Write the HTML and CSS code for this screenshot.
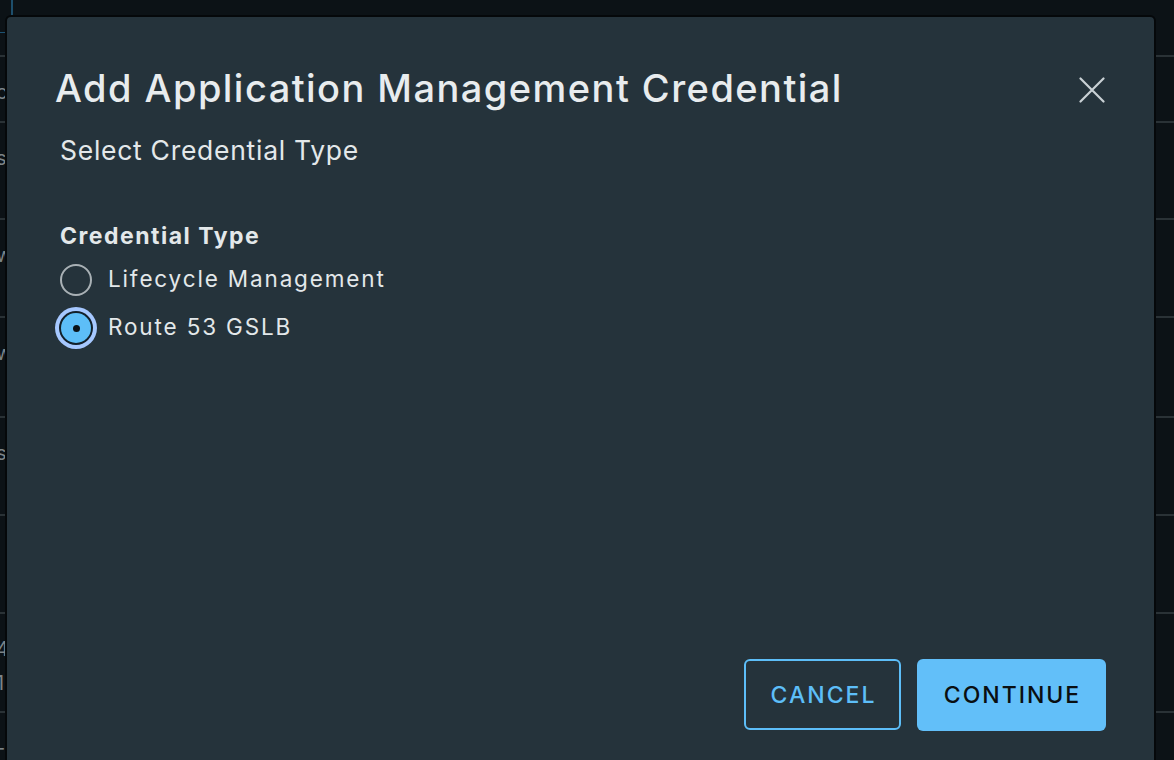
FILE: index.html
```html
<!DOCTYPE html>
<html>
<head>
<meta charset="utf-8">
<link rel="stylesheet" href="styles.css">
</head>
<body>
<div class="page">
  <div class="bg-list">
    <div class="bg-tab"></div>
    <div class="bg-row r1"></div>
    <div class="bg-row r2"><span class="frag">c</span></div>
    <div class="bg-row r3"><span class="frag">s</span></div>
    <div class="bg-row r4"><span class="frag">w</span></div>
    <div class="bg-row r5"><span class="frag">w</span></div>
    <div class="bg-row r6"><span class="frag">s</span></div>
    <div class="bg-row r7"></div>
    <div class="bg-row r8"><span class="frag">4<br>1</span></div>
    <div class="bg-row r9"><span class="frag">-</span></div>
  </div>
  <div class="bluemark"></div>

  <div class="modal" role="dialog">
    <div class="modal-header">
      <h3 class="modal-title">Add Application Management Credential</h3>
      <button class="close" aria-label="Close">
        <svg width="26" height="26" viewBox="0 0 26 26"><path d="M1.5 1.5 L24.5 24.5 M24.5 1.5 L1.5 24.5" stroke="#c9d1d5" stroke-width="2.2" stroke-linecap="round" fill="none"/></svg>
      </button>
    </div>
    <div class="modal-body">
      <p class="subtitle">Select Credential Type</p>
      <div class="field">
        <div class="field-label">Credential Type</div>
        <div class="radio-list">
          <label class="radio">
            <span class="radio-box"><span class="radio-circle"></span></span>
            <span class="radio-text">Lifecycle Management</span>
          </label>
          <label class="radio checked">
            <span class="radio-box"><span class="radio-circle"><span class="dot"></span></span></span>
            <span class="radio-text">Route 53 GSLB</span>
          </label>
        </div>
      </div>
    </div>
    <div class="modal-footer">
      <button class="btn btn-outline">CANCEL</button>
      <button class="btn btn-primary">CONTINUE</button>
    </div>
  </div>
</div>
</body>
</html>
```

FILE: styles.css
```css
* { box-sizing: border-box; }
html, body {
  margin: 0;
  padding: 0;
}
body {
  width: 1174px;
  height: 760px;
  overflow: hidden;
  background: #0c1216;
  font-family: "Inter", "Lato", sans-serif;
}
.page {
  position: relative;
  width: 1174px;
  height: 760px;
}
.bg-list {
  display: flex;
  flex-direction: column;
}
.bg-tab {
  width: 13px;
  height: 33px;
  border-bottom: 1px solid #1d5272;
}
.bg-row {
  border-bottom: 2px solid #2a3236;
  display: flex;
  align-items: flex-start;
  color: #7b8488;
  font-size: 20px;
  line-height: 34px;
  padding-top: 18px;
}
.frag { margin-left: -4px; }
.r1 { height: 24px; padding-top: 0; }
.r2 { height: 66px; }
.r3 { height: 97px; }
.r4 { height: 98px; }
.r5 { height: 100px; }
.r6 { height: 98px; }
.r7 { height: 98px; }
.r8 { height: 99px; }
.r9 { height: 60px; border-bottom: none; }
.bluemark {
  position: absolute;
  left: 11px;
  top: 0;
  width: 2px;
  height: 16px;
  background: #1d4e6b;
}

.modal {
  position: absolute;
  left: 5px;
  top: 15px;
  width: 1151px;
  height: 760px;
  background: #25333b;
  border: 2px solid #05080a;
  border-radius: 6px;
  display: flex;
  flex-direction: column;
  color: #e9edef;
}
.modal-header {
  display: flex;
  align-items: flex-start;
  justify-content: space-between;
  padding: 48px 49px 0 48px;
}
.modal-title {
  margin: 0;
  font-weight: 500;
  font-size: 38px;
  line-height: 46px;
  letter-spacing: 1.45px;
  color: #e8ecee;
}
.close {
  background: none;
  border: none;
  padding: 0;
  margin-top: 12px;
  width: 26px;
  height: 26px;
  cursor: pointer;
}
.close svg { display: block; }
.modal-body {
  padding: 0 53px;
  flex: 1;
}
.subtitle {
  margin: 23px 0 0;
  font-size: 26.5px;
  line-height: 32px;
  letter-spacing: 0.72px;
  color: #e3e8ea;
}
.field { margin-top: 56px; }
.field-label {
  font-size: 23px;
  font-weight: 700;
  line-height: 28px;
  letter-spacing: 1.5px;
  color: #e3e8ea;
}
.radio-list {
  margin-top: 6px;
  display: flex;
  flex-direction: column;
}
.radio {
  display: flex;
  align-items: center;
  gap: 16px;
  height: 48px;
}
.radio-box {
  width: 32px;
  height: 32px;
  display: flex;
  align-items: center;
  justify-content: center;
  flex-shrink: 0;
}
.radio-circle {
  width: 32px;
  height: 32px;
  border-radius: 50%;
  border: 2px solid #a9b1b5;
  display: flex;
  align-items: center;
  justify-content: center;
}
.radio.checked .radio-circle {
  width: 30px;
  height: 30px;
  background: #5dbef8;
  border: none;
  box-shadow: 0 0 0 2px #13202a, 0 0 0 6px #a6c8ff;
}
.dot {
  width: 7px;
  height: 7px;
  border-radius: 50%;
  background: #0b1218;
}
.radio-text {
  font-size: 22.5px;
  line-height: 28px;
  letter-spacing: 1.85px;
  color: #e3e8ea;
  margin-bottom: 3px;
}
.modal-footer {
  display: flex;
  justify-content: flex-end;
  align-items: flex-start;
  gap: 16px;
  padding: 0 48px 42px;
}
.btn {
  height: 72px;
  border-radius: 6px;
  font-family: inherit;
  font-size: 23px;
  font-weight: 500;
  letter-spacing: 2px;
  padding: 0 0 0 2px;
}
.btn-outline {
  width: 157px;
  height: 71px;
  background: transparent;
  border: 2px solid #5dbef8;
  color: #5dbef8;
}
.btn-primary {
  width: 189px;
  background: #62bff9;
  border: none;
  color: #0a0f12;
}
```
